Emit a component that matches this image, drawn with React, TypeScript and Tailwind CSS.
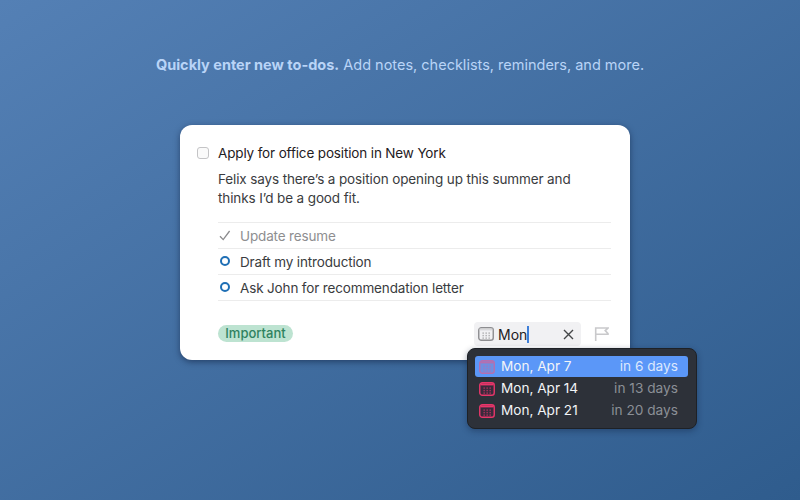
import React from "react";

function Cal({ stroke, fill, head, className }: { stroke: string; fill: string; head: string; className?: string }) {
  return (
    <svg width="16" height="14" viewBox="0 0 16 14" className={className}>
      <rect x="0.75" y="0.75" width="14.5" height="12.5" rx="2.6" fill={fill} stroke={stroke} strokeWidth="1.4" />
      <rect x="1.5" y="1.4" width="13" height="2" fill={head} />
      {[5, 8, 11].map((x) =>
        [6, 8.5, 11].map((y) => <rect key={`${x}-${y}`} x={x - 0.6} y={y - 0.6} width="1.6" height="1.4" fill={stroke} opacity="0.6" />)
      )}
    </svg>
  );
}

function Row({ active, date, rel }: { active?: boolean; date: string; rel: string }) {
  return (
    <div className={`mb-[1px] flex h-[21px] items-center rounded-[3px] pl-[4px] pr-[10px] ${active ? "bg-[#5b97f8]" : ""}`}>
      <Cal
        stroke={active ? "#b56fb0" : "#e8366a"}
        fill={active ? "#6f8fe0" : "#3a2a3c"}
        head={active ? "#b56fb0" : "#e8366a"}
      />
      <span className="ml-[6px] flex-1 text-[13.6px] text-[#f2f4f7]">{date}</span>
      <span className={`text-[13.7px] ${active ? "text-[#dbe8fd]" : "text-[#8b8f96]"}`}>{rel}</span>
    </div>
  );
}

function Item({ children, done }: { children: React.ReactNode; done?: boolean }) {
  return (
    <div className="flex h-[26px] items-center border-b border-[#ececec]">
      <div className={`flex w-[14px] justify-center ${done ? "" : "pb-[2px]"}`}>
        {done ? (
          <svg width="12" height="11" viewBox="0 0 12 11" fill="none">
            <path d="M1 6.2 L4.2 9.6 L10.6 1" stroke="#8a8a8c" strokeWidth="1.3" />
          </svg>
        ) : (
          <div className="size-[10px] rounded-full border-2 border-[#1f6fb5]" />
        )}
      </div>
      <span className={`ml-[8px] pt-[1px] text-[13.5px] tracking-[-0.15px] ${done ? "text-[#8e8e90]" : "text-[#3a3c40]"}`}>{children}</span>
    </div>
  );
}

export default function App() {
  return (
    <div className="relative h-[500px] w-[800px] overflow-hidden bg-gradient-to-br from-[#5480b5] to-[#2f5c8d] font-['Inter',sans-serif]">
      <p className="pt-[56px] text-center text-[14.5px] leading-[18px] text-[#b9d4f7]">
        <span className="font-bold">Quickly enter new to-dos.</span> Add notes, checklists, reminders, and more.
      </p>

      <div className="ml-[180px] mt-[51px] h-[235px] w-[450px] rounded-[12px] bg-white px-[19px] pt-[18px] shadow-[0_2px_6px_rgba(15,30,60,0.55)]">
        <div className="flex h-[20px] items-center">
          <div className="ml-[-2px] size-[12px] rounded-[3px] border border-[#c4c4c6] bg-[#fafafa]" />
          <span className="ml-[9px] text-[13.5px] tracking-[-0.15px] text-[#1f2023]">Apply for office position in New York</span>
        </div>
        <p className="mt-[7px] pl-[19px] text-[13.5px] leading-[19px] tracking-[-0.12px] text-[#3a3c40]">
          Felix says there’s a position opening up this summer and
          <br />
          thinks I’d be a good fit.
        </p>
        <div className="ml-[19px] mt-[14px] border-t border-[#ececec]">
          <Item done>Update resume</Item>
          <Item>Draft my introduction</Item>
          <Item>Ask John for recommendation letter</Item>
        </div>
        <div className="ml-[19px] mt-[21px] flex items-start">
          <span className="mt-[3px] flex h-[17px] w-[75px] items-center justify-center rounded-full bg-[#bde3d1] text-[13px] font-medium text-[#2f8260]">
            Important
          </span>
          <div className="ml-auto flex items-center">
            <div className="flex h-[24px] w-[107px] items-center rounded-[4px] bg-[#f1f1f3] pl-[4px]">
              <Cal stroke="#8d8d90" fill="#f1f1f3" head="#d8d8da" />
              <span className="ml-[4px] text-[14px] text-[#1f2023]">Mon</span>
              <span className="h-[17px] w-[1.5px] bg-[#3f7fd8]" />
              <svg width="11" height="11" viewBox="0 0 11 11" className="ml-auto mr-[7px]">
                <path d="M1 1 L10 10 M10 1 L1 10" stroke="#444648" strokeWidth="1.4" />
              </svg>
            </div>
            <svg width="15" height="14" viewBox="0 0 15 14" fill="none" className="ml-[13px] mr-[2px]">
              <path d="M1.7 14 V1 H14 L11.2 3.6 L14 6.6 V7.2 H1.7" stroke="#c9c9cb" strokeWidth="1.6" />
            </svg>
          </div>
        </div>
      </div>

      <div className="absolute left-[467px] top-[348px] h-[81px] w-[230px] rounded-[8px] border border-[#1e2126] bg-[#2d3139] pl-[7px] pr-[8px] pt-[7px] shadow-[0_2px_6px_rgba(15,30,60,0.4)]">
        <Row active date="Mon, Apr 7" rel="in 6 days" />
        <Row date="Mon, Apr 14" rel="in 13 days" />
        <Row date="Mon, Apr 21" rel="in 20 days" />
      </div>
    </div>
  );
}
